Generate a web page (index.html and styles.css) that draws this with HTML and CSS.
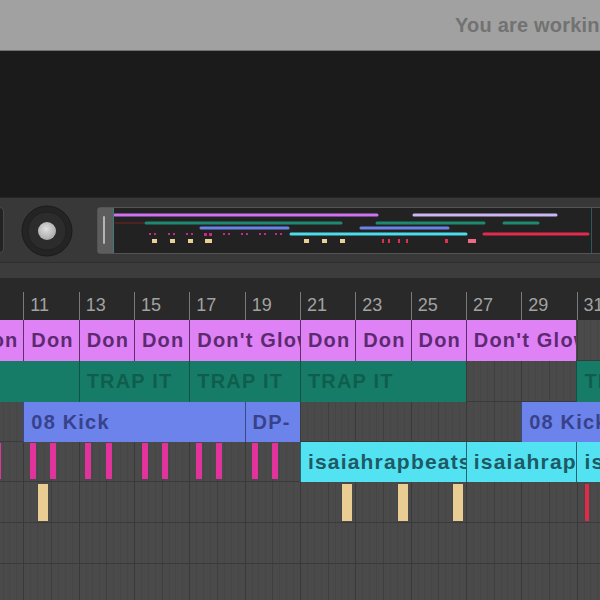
FILE: index.html
```html
<!DOCTYPE html>
<html>
  <head>
    <meta charset="utf-8" />
    <title>Song editor</title>
    <meta name="viewport" content="width=device-width, initial-scale=1" />
    <link rel="stylesheet" href="styles.css">
  </head>
  <body>
    <div class="notice-bar">
      <span class="notice-text">You are working on a shared copy of this song</span>
    </div>

    <div class="stage"></div>

    <div class="transport">
      <div class="edge-button"></div>
      <svg class="knob" width="52" height="52" viewBox="0 0 52 52">
        <defs>
          <radialGradient id="knob-cap" cx="0.45" cy="0.4" r="0.6">
            <stop offset="0" stop-color="#dedede" />
            <stop offset="1" stop-color="#a9a9a9" />
          </radialGradient>
        </defs>
        <circle cx="26" cy="26" r="25" fill="#242424" stroke="#1b1b1b" stroke-width="1" />
        <circle cx="26" cy="26" r="19" fill="#2c2c2c" stroke="#202020" stroke-width="1" />
        <circle cx="26" cy="26" r="9" fill="url(#knob-cap)" />
      </svg>

      <div class="overview">
        <div class="overview-handle"><span class="handle-grip"></span></div>
        <svg class="overview-map" width="487" height="45" viewBox="0 0 487 45">
          <g stroke-linecap="round" stroke-width="3">
            <line x1="1" y1="7" x2="263" y2="7" stroke="#d072ef" />
            <line x1="300" y1="7" x2="442" y2="7" stroke="#c9b6f2" />
            <line x1="1" y1="15" x2="30" y2="15" stroke="#5a2222" stroke-width="1.5" />
            <line x1="32" y1="15" x2="227" y2="15" stroke="#1d8a70" />
            <line x1="263" y1="15" x2="370" y2="15" stroke="#1d8a70" />
            <line x1="390" y1="15" x2="424" y2="15" stroke="#1d8a70" />
            <line x1="87" y1="20" x2="174" y2="20" stroke="#6b82e6" />
            <line x1="247" y1="20" x2="334" y2="20" stroke="#6b82e6" />
            <line x1="177" y1="26" x2="352" y2="26" stroke="#4cdcec" />
            <line x1="370" y1="26" x2="474" y2="26" stroke="#e22a4c" />
          </g>
          <g fill="#c42a86">
            <rect x="35" y="25" width="2" height="2" /><rect x="40" y="25" width="2" height="2" />
            <rect x="54" y="25" width="2" height="2" /><rect x="59" y="25" width="2" height="2" />
            <rect x="72" y="25" width="2" height="2" /><rect x="77" y="25" width="2" height="2" />
            <rect x="90" y="25" width="3" height="3" /><rect x="95" y="25" width="3" height="3" />
            <rect x="109" y="25" width="2" height="2" /><rect x="114" y="25" width="2" height="2" />
            <rect x="127" y="25" width="2" height="2" /><rect x="132" y="25" width="2" height="2" />
            <rect x="145" y="25" width="2" height="2" /><rect x="150" y="25" width="2" height="2" />
            <rect x="161" y="25" width="2" height="2" /><rect x="166" y="25" width="2" height="2" />
          </g>
          <g fill="#e9d194">
            <rect x="38" y="31" width="5" height="4" />
            <rect x="56" y="31" width="5" height="4" />
            <rect x="74" y="31" width="5" height="4" />
            <rect x="91" y="31" width="7" height="4" />
            <rect x="190" y="31" width="5" height="4" />
            <rect x="208" y="31" width="5" height="4" />
            <rect x="226" y="31" width="5" height="4" />
          </g>
          <g fill="#e0304e">
            <rect x="268" y="31" width="2" height="4" />
            <rect x="274" y="31" width="2" height="4" />
            <rect x="284" y="31" width="2" height="4" />
            <rect x="292" y="31" width="2" height="4" />
            <rect x="331" y="31" width="3" height="4" />
            <rect x="354" y="31" width="8" height="4" fill="#f06a82" />
          </g>
          <line x1="477.5" y1="0" x2="477.5" y2="45" stroke="#2a5a5a" stroke-width="1" />
        </svg>
      </div>
    </div>

    <div class="toolbar-strip"></div>

    <div class="timeline">
      <div class="ruler">
        <div class="ruler-cell">9</div>
        <div class="ruler-cell">11</div>
        <div class="ruler-cell">13</div>
        <div class="ruler-cell">15</div>
        <div class="ruler-cell">17</div>
        <div class="ruler-cell">19</div>
        <div class="ruler-cell">21</div>
        <div class="ruler-cell">23</div>
        <div class="ruler-cell">25</div>
        <div class="ruler-cell">27</div>
        <div class="ruler-cell">29</div>
        <div class="ruler-cell">31</div>
      </div>

      <div class="lanes">
        <div class="lane">
          <div class="clip clip-pink bars-2">Don</div>
          <div class="clip clip-pink bars-2">Don</div>
          <div class="clip clip-pink bars-2">Don</div>
          <div class="clip clip-pink bars-2">Don</div>
          <div class="clip clip-pink bars-4">Don't Glow</div>
          <div class="clip clip-pink bars-2">Don</div>
          <div class="clip clip-pink bars-2">Don</div>
          <div class="clip clip-pink bars-2">Don</div>
          <div class="clip clip-pink bars-4">Don't Glow</div>
        </div>

        <div class="lane">
          <div class="clip clip-teal bars-4"></div>
          <div class="clip clip-teal bars-4">TRAP IT</div>
          <div class="clip clip-teal bars-4">TRAP IT</div>
          <div class="clip clip-teal bars-6">TRAP IT</div>
          <div class="gap bars-4"></div>
          <div class="clip clip-teal bars-4">TRAP IT</div>
        </div>

        <div class="lane lane-short">
          <div class="gap bars-2"></div>
          <div class="clip clip-blue bars-8">08 Kick</div>
          <div class="clip clip-blue bars-2">DP-</div>
          <div class="gap bars-8"></div>
          <div class="clip clip-blue bars-4">08 Kick</div>
        </div>

        <div class="lane lane-short">
          <div class="gap bars-12"></div>
          <div class="clip clip-cyan bars-6">isaiahrapbeats</div>
          <div class="clip clip-cyan bars-4">isaiahrapbeats</div>
          <div class="clip clip-cyan bars-4">isaiahrapbeats</div>
          <span class="note note-hat" style="left: 27px"></span>
          <span class="note note-hat" style="left: 62px"></span>
          <span class="note note-hat" style="left: 82px"></span>
          <span class="note note-hat" style="left: 117px"></span>
          <span class="note note-hat" style="left: 138px"></span>
          <span class="note note-hat" style="left: 174px"></span>
          <span class="note note-hat" style="left: 194px"></span>
          <span class="note note-hat" style="left: 228px"></span>
          <span class="note note-hat" style="left: 248px"></span>
          <span class="note note-hat" style="left: 284px"></span>
          <span class="note note-hat" style="left: 304px"></span>
        </div>

        <div class="lane">
          <span class="note note-snare" style="left: 70px"></span>
          <span class="note note-snare" style="left: 374px"></span>
          <span class="note note-snare" style="left: 430px"></span>
          <span class="note note-snare" style="left: 485px"></span>
          <span class="note note-perc" style="left: 617px"></span>
        </div>

        <div class="lane"></div>
        <div class="lane"></div>
      </div>
    </div>
  </body>
</html>
```

FILE: styles.css
```css
body {
  margin: 0;
  width: 600px;
  height: 600px;
  overflow: hidden;
  background-color: #1b1b1b;
  font-family: "Liberation Sans", Arial, sans-serif;
}

.notice-bar {
  height: 50px;
  background-color: #a1a1a1;
  border-bottom: 1px solid #707070;
  display: flex;
  align-items: center;
  padding-left: 455px;
  overflow: hidden;
}

.notice-text {
  white-space: nowrap;
  font-size: 20px;
  font-weight: bold;
  color: #727272;
  letter-spacing: 0.2px;
}

.stage {
  height: 146px;
  background-color: #1b1b1b;
}

.transport {
  height: 64px;
  background-color: #383838;
  border-top: 1px solid #262626;
  display: flex;
  align-items: center;
  overflow: hidden;
}

.edge-button {
  width: 10px;
  height: 44px;
  margin-left: -8px;
  background-color: #232323;
  border: 1px solid #484848;
  border-radius: 4px;
  flex: none;
}

.knob {
  flex: none;
  margin-left: 17px;
  margin-top: 1px;
}

.overview {
  flex: none;
  display: flex;
  width: 520px;
  height: 45px;
  margin-left: 24px;
  margin-top: 0;
  background-color: #222222;
  border: 1px solid #545454;
  border-radius: 3px;
}

.overview-handle {
  width: 15px;
  background-color: #5d5d5d;
  border-right: 1px solid #3f7a78;
  display: flex;
  align-items: center;
  justify-content: center;
}

.handle-grip {
  width: 2px;
  height: 28px;
  margin-left: -3px;
  background-color: #b4b4b4;
  border-radius: 1px;
}

.overview-map {
  display: block;
}

.toolbar-strip {
  height: 15px;
  background-color: #3c3c3c;
  border-top: 1px solid #2e2e2e;
}

.timeline {
  width: 600px;
  overflow: hidden;
}

.ruler {
  height: 42px;
  background-color: #292929;
  display: grid;
  grid-template-columns: repeat(12, calc(166px / 3));
  margin-left: -32px;
}

.ruler-cell {
  position: relative;
  padding: 17px 0 0 7px;
  font-size: 18px;
  color: #a2a2a2;
}

.ruler-cell::before {
  content: "";
  position: absolute;
  left: 0;
  top: 14px;
  bottom: 0;
  width: 1px;
  background-color: #7a7a7a;
}

.lanes {
  margin-left: -32px;
  width: 830px;
  background-color: #4a4a4a;
  background-image:
    repeating-linear-gradient(to right, #393939 0 1px, transparent 1px calc(166px / 3)),
    repeating-linear-gradient(to right, #3f3f3f 0 1px, transparent 1px calc(83px / 3)),
    repeating-linear-gradient(to right, #464646 0 1px, transparent 1px calc(83px / 12));
}

.lane {
  position: relative;
  height: 41px;
  display: grid;
  grid-template-columns: repeat(30, calc(83px / 3));
  box-shadow: inset 0 -1px 0 #3a3a3a;
}

.lane-short {
  height: 40px;
}

.bars-2 { grid-column: span 2; }
.bars-4 { grid-column: span 4; }
.bars-6 { grid-column: span 6; }
.bars-8 { grid-column: span 8; }
.bars-12 { grid-column: span 12; }

.clip {
  display: flex;
  align-items: center;
  padding-left: 7px;
  overflow: hidden;
  white-space: nowrap;
  font-size: 20px;
  font-weight: bold;
  letter-spacing: 1.2px;
  box-sizing: border-box;
}

.clip-pink {
  background-color: #df82f6;
  color: #5c2a70;
  border-left: 1px solid #5e2f6a;
}

.clip-teal {
  background-color: #167c67;
  color: #0f5e4d;
  border-left: 1px solid #0f5546;
}

.clip-blue {
  background-color: #6b83ea;
  color: #38428a;
  border-left: 1px solid #3a4a86;
}

.clip-cyan {
  background-color: #52e2f2;
  color: #1e5965;
  border-left: 1px solid #276470;
  font-size: 21px;
}

.note {
  position: absolute;
}

.note-hat {
  top: 1px;
  bottom: 3px;
  width: 6px;
  background-color: #e2339c;
}

.note-snare {
  top: 2px;
  bottom: 2px;
  width: 10px;
  background-color: #e9cd92;
}

.note-perc {
  top: 2px;
  bottom: 2px;
  width: 4px;
  background-color: #e12a4a;
}
```
